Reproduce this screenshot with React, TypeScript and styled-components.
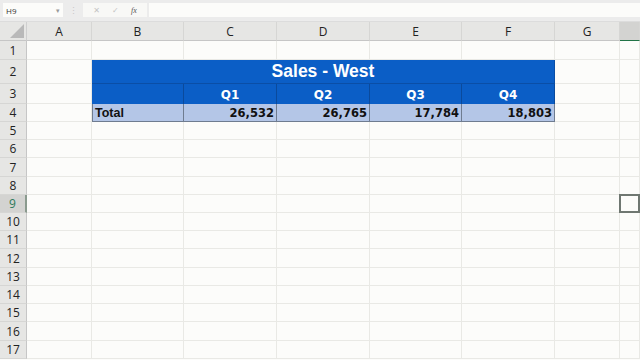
import React from "react"
import styled, { createGlobalStyle } from "styled-components"

const GlobalStyle = createGlobalStyle`
  html, body {
    margin: 0;
    padding: 0;
    width: 640px;
    height: 360px;
    overflow: hidden;
    background: #fcfcfa;
  }
  * {
    box-sizing: border-box;
  }
`

const columns = ["A", "B", "C", "D", "E", "F", "G", ""]
// rows 1..17, a few rows are a pixel taller like in the sheet zoom
const rowHeights = [19, 24, 20, 18, 18, 18, 19, 18, 18, 18, 18, 19, 18, 18, 18, 19, 18]
const quarters = [
  { label: "Q1", value: "26,532" },
  { label: "Q2", value: "26,765" },
  { label: "Q3", value: "17,784" },
  { label: "Q4", value: "18,803" },
]
const selectedRow = 9

const App = () => {
  return (
    <Page>
      <GlobalStyle />
      <FormulaBar>
        <NameBox>
          <span>H9</span>
          <Caret>▾</Caret>
        </NameBox>
        <Grip>⋮</Grip>
        <FxButtons>
          <FxIcon>✕</FxIcon>
          <FxIcon>✓</FxIcon>
          <FxIcon $italic>fx</FxIcon>
        </FxButtons>
        <FormulaInput />
      </FormulaBar>

      <Sheet style={{ gridTemplateRows: `19px ${rowHeights.join("px ")}px` }}>
        <Corner>
          <svg width="14" height="14" viewBox="0 0 14 14">
            <polygon points="14,0 14,14 0,14" fill="#b9b9b9" />
          </svg>
        </Corner>
        {columns.map((c, i) => (
          <ColHeader key={i} $selected={i === 7}>
            {c}
          </ColHeader>
        ))}

        {rowHeights.map((_, r) => {
          const row = r + 1
          return (
            <React.Fragment key={row}>
              <RowHeader $selected={row === selectedRow}>{row}</RowHeader>
              {row === 2 ? (
                <>
                  <Cell />
                  <TitleCell>Sales - West</TitleCell>
                  <Cell />
                  <Cell />
                </>
              ) : row === 3 ? (
                <>
                  <Cell />
                  <HeadCell />
                  {quarters.map((q) => (
                    <HeadCell key={q.label}>{q.label}</HeadCell>
                  ))}
                  <Cell />
                  <Cell />
                </>
              ) : row === 4 ? (
                <>
                  <Cell />
                  <TotalCell $left>Total</TotalCell>
                  {quarters.map((q) => (
                    <TotalCell key={q.label}>{q.value}</TotalCell>
                  ))}
                  <Cell />
                  <Cell />
                </>
              ) : (
                columns.map((_, i) => (
                  <Cell key={i}>
                    {row === selectedRow && i === 7 && <Selection />}
                  </Cell>
                ))
              )}
            </React.Fragment>
          )
        })}
      </Sheet>
    </Page>
  )
}

const Page = styled.div`
  width: 640px;
  height: 360px;
  overflow: hidden;
  display: flex;
  flex-direction: column;
  background: #fcfcfa;
  font-family: "Open Sans", "Noto Sans", sans-serif;
`

const FormulaBar = styled.div`
  flex-shrink: 0;
  height: 22px;
  display: flex;
  align-items: flex-start;
  padding: 3px 0 0 3px;
  background: #ececec;
  border-bottom: 1px solid #dcdcdc;
`

const NameBox = styled.div`
  width: 60px;
  height: 14px;
  background: #fcfcfa;
  display: flex;
  align-items: center;
  justify-content: space-between;
  padding: 0 3px;
  font-size: 8px;
  color: #333;
`

const Caret = styled.span`
  font-size: 7px;
  color: #9a9a9a;
`

const Grip = styled.div`
  width: 20px;
  height: 14px;
  display: flex;
  align-items: center;
  justify-content: center;
  font-size: 9px;
  color: #c8c8c8;
`

const FxButtons = styled.div`
  width: 64px;
  height: 14px;
  background: #f8f8f6;
  display: flex;
  align-items: center;
  justify-content: space-around;
  padding: 0 4px;
`

const FxIcon = styled.span<{ $italic?: boolean }>`
  font-size: 8px;
  font-family: ${(p) => (p.$italic ? '"Liberation Serif", serif' : '"DejaVu Sans", sans-serif')};
  font-style: ${(p) => (p.$italic ? "italic" : "normal")};
  color: ${(p) => (p.$italic ? "#555" : "#c4c4c4")};
`

const FormulaInput = styled.div`
  flex: 1;
  height: 14px;
  margin-left: 2px;
  background: #fcfcfa;
`

const Sheet = styled.div`
  flex-shrink: 0;
  display: grid;
  grid-template-columns: 27px 65px 92px 93px 93px 92px 93px 65px 1fr;
  background: #fcfcfa;
`

const Corner = styled.div`
  background: #e6e6e4;
  border-right: 1px solid #cfcfcf;
  border-bottom: 1px solid #c6c6c6;
  display: flex;
  align-items: flex-end;
  justify-content: flex-end;
  padding: 0 2px 2px 0;
`

const ColHeader = styled.div<{ $selected?: boolean }>`
  background: ${(p) => (p.$selected ? "#d3d3d1" : "#e6e6e4")};
  border-right: 1px solid #d6d6d4;
  border-bottom: 1px solid ${(p) => (p.$selected ? "#217346" : "#c6c6c6")};
  display: flex;
  align-items: center;
  justify-content: center;
  font-size: 12px;
  color: #222;
`

const RowHeader = styled.div<{ $selected?: boolean }>`
  background: ${(p) => (p.$selected ? "#d3d3d1" : "#e6e6e4")};
  border-right: ${(p) => (p.$selected ? "2px solid #8a9a8e" : "1px solid #c6c6c6")};
  border-bottom: 1px solid #d6d6d4;
  display: flex;
  align-items: center;
  justify-content: center;
  font-size: 12px;
  color: ${(p) => (p.$selected ? "#2f7a5a" : "#222")};
`

const Cell = styled.div`
  position: relative;
  border-right: 1px solid #e9e9e5;
  border-bottom: 1px solid #e9e9e5;
`

const Selection = styled.div`
  position: absolute;
  inset: -1px;
  border: 2px solid #6f7771;
`

const TitleCell = styled.div`
  grid-column: span 5;
  background: #0b5ec6;
  border-bottom: 1px solid #0a4ea6;
  border-right: 1px solid #0a4ea6;
  display: flex;
  align-items: center;
  justify-content: center;
  color: #fff;
  font-family: "Liberation Sans", Arial, sans-serif;
  font-weight: 700;
  font-size: 17.5px;
`

const HeadCell = styled.div`
  background: #0b5ec6;
  border-right: 1px solid #0a4a9c;
  display: flex;
  align-items: center;
  justify-content: center;
  padding-top: 2px;
  color: #fff;
  font-family: "DejaVu Sans", sans-serif;
  font-weight: 700;
  font-size: 12px;
`

const TotalCell = styled.div<{ $left?: boolean }>`
  background: #b4c6e7;
  border-right: 1px solid #6f7c90;
  border-bottom: 1px solid #6f7c90;
  border-left: ${(p) => (p.$left ? "1px solid #6f7c90" : "none")};
  display: flex;
  align-items: center;
  justify-content: ${(p) => (p.$left ? "flex-start" : "flex-end")};
  padding: 0 2px;
  color: #111;
  font-family: ${(p) => (p.$left ? '"Liberation Sans", Arial, sans-serif' : '"DejaVu Sans", sans-serif')};
  font-weight: 700;
  font-size: ${(p) => (p.$left ? "12.5px" : "11.5px")};
`

export default App
